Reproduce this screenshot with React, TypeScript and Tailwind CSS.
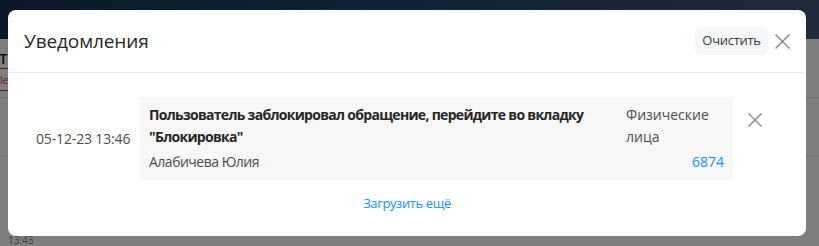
import React from "react";

function XIcon({ size = 15, stroke = "#8c8c8c", width = 1.6 }: { size?: number; stroke?: string; width?: number }) {
  return (
    <svg width={size} height={size} viewBox="0 0 15 15" fill="none">
      <path d="M1 1L14 14M14 1L1 14" stroke={stroke} strokeWidth={width} strokeLinecap="square" />
    </svg>
  );
}

export default function App() {
  const font = { fontFamily: '"Open Sans", "Noto Sans", sans-serif' };
  return (
    <div className="relative w-[819px] h-[246px] overflow-hidden bg-[#7f7f7f]" style={font}>
      {/* page behind the overlay */}
      <div className="flex flex-col w-full h-full">
        <div className="h-[40px] w-full bg-gradient-to-r from-[#0b192b] via-[#122135] to-[#1f2b3b]" />
        <div className="flex flex-col pt-[10px]">
          <div className="text-[15px] leading-[18px] font-semibold text-[#111] -ml-[1px]">Т</div>
          <div className="h-[1px] w-[20px] bg-[#7a1010] mt-[1px]" />
          <div className="text-[10px] leading-[12px] text-[#6e1515] mt-[5px]">Ie.</div>
          <div className="h-[1px] w-[20px] bg-[#741414] mt-[4px]" />
          <div className="h-[1px] w-full bg-[#737373] mt-[6px]" />
          <div className="h-[1px] w-full bg-[#737373] mt-[58px]" />
          <div className="text-[10px] leading-[12px] text-[#3f3f3f] mt-[77px] pl-[8px]">13:43</div>
        </div>
      </div>

      {/* modal */}
      <div className="absolute left-[8px] top-[10px] w-[798px] h-[226px] bg-white rounded-[8px] flex flex-col">
        <div className="h-[63px] shrink-0 flex items-center justify-between pl-[16px] pr-[16px] border-b border-[#e8e8e8]">
          <div className="text-[19px] leading-[28px] text-[#262626] tracking-[-0.1px]">Уведомления</div>
          <div className="flex items-center gap-[7px]">
            <button className="h-[28px] w-[73px] rounded-[6px] bg-[#f5f6f8] text-[13px] tracking-[-0.3px] text-[#3a3a3a] flex items-center justify-center">
              Очистить
            </button>
            <XIcon size={15} stroke="#8a8a8a" width={1.5} />
          </div>
        </div>

        <div className="flex flex-col pt-[24px]">
          <div className="flex items-center pl-[28px]">
            <div className="text-[14px] leading-[22px] tracking-[-0.15px] text-[#4d4d4d] w-[104px] shrink-0">05-12-23 13:46</div>
            <div className="w-[593px] bg-[#f7f7f7] flex gap-[20px] pl-[9px] pr-[9px] pt-[7px] pb-[7px]">
              <div className="flex-1 flex flex-col min-w-0">
                <div className="text-[14px] leading-[22px] font-bold tracking-[-0.7px] text-[#262626] whitespace-nowrap">
                  Пользователь заблокировал обращение, перейдите во вкладку
                  <br />
                  "Блокировка"
                </div>
                <div className="text-[14px] leading-[22px] tracking-[-0.5px] text-[#4d4d4d] mt-[3px]">Алабичева Юлия</div>
              </div>
              <div className="w-[98px] shrink-0 flex flex-col">
                <div className="text-[14px] leading-[22px] text-[#4d4d4d]">Физические лица</div>
                <div className="text-[14px] leading-[22px] text-[#1890ff] text-right mt-[3px]">6874</div>
              </div>
            </div>
            <div className="self-start mt-[16px] ml-[15px]">
              <XIcon size={14} stroke="#8a8a8a" width={1.5} />
            </div>
          </div>
          <div className="text-center text-[13px] leading-[18px] tracking-[-0.4px] text-[#1890ff] mt-[14px]">Загрузить ещё</div>
        </div>
      </div>
    </div>
  );
}
